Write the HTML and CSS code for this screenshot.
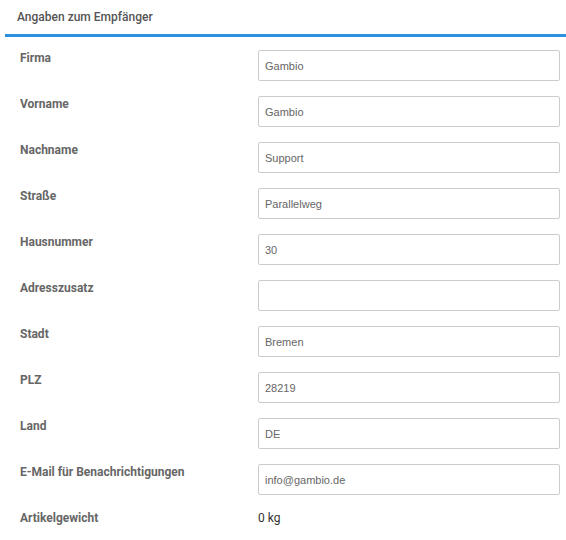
FILE: index.html
```html
<!DOCTYPE html>
<html>
<head>
<meta charset="utf-8">
<link rel="stylesheet" href="styles.css">
</head>
<body>
<div class="panel">
  <div class="panel-head">Angaben zum Empfänger</div>
  <div class="form">
    <div class="row"><div class="label">Firma</div><div class="field"><input class="input" value="Gambio"></div></div>
    <div class="row"><div class="label">Vorname</div><div class="field"><input class="input" value="Gambio"></div></div>
    <div class="row"><div class="label">Nachname</div><div class="field"><input class="input" value="Support"></div></div>
    <div class="row"><div class="label">Straße</div><div class="field"><input class="input" value="Parallelweg"></div></div>
    <div class="row"><div class="label">Hausnummer</div><div class="field"><input class="input" value="30"></div></div>
    <div class="row"><div class="label">Adresszusatz</div><div class="field"><input class="input" value=""></div></div>
    <div class="row"><div class="label">Stadt</div><div class="field"><input class="input" value="Bremen"></div></div>
    <div class="row"><div class="label">PLZ</div><div class="field"><input class="input" value="28219"></div></div>
    <div class="row"><div class="label">Land</div><div class="field"><input class="input" value="DE"></div></div>
    <div class="row"><div class="label">E-Mail für Benachrichtigungen</div><div class="field"><input class="input" value="info@gambio.de"></div></div>
    <div class="row static"><div class="label">Artikelgewicht</div><div class="field value">0 kg</div></div>
  </div>
</div>
</body>
</html>
```
FILE: styles.css
```css
html, body {
  margin: 0;
  padding: 0;
  background: #fff;
}
body {
  font-family: Roboto, "Liberation Sans", sans-serif;
  width: 566px;
  height: 540px;
  overflow: hidden;
}
.panel {
  padding-left: 5px;
}
.panel-head {
  height: 37px;
  box-sizing: border-box;
  padding: 10px 12px 0;
  font-size: 12px;
  font-weight: 500;
  color: #555;
  line-height: 14px;
  border-bottom: 3px solid #2b90e0;
}
.form {
  padding-top: 13px;
}
.row {
  display: flex;
  height: 46px;
}
.label {
  width: 238px;
  padding-left: 15px;
  padding-top: 1px;
  font-size: 12px;
  font-weight: 700;
  color: #666;
  line-height: 14px;
}
.field {
  flex: none;
}
.input {
  display: block;
  box-sizing: border-box;
  width: 302px;
  height: 31px;
  margin: 0;
  padding: 0 6px;
  border: 1px solid #ccc;
  border-radius: 2px;
  font-family: "Liberation Sans", Arial, sans-serif;
  font-size: 11px;
  color: #666;
  background: #fff;
  outline: none;
}
.row.static .label {
  padding-top: 1px;
}
.value {
  font-size: 12px;
  font-weight: 400;
  color: #333;
  padding-top: 1px;
  line-height: 14px;
}
```
